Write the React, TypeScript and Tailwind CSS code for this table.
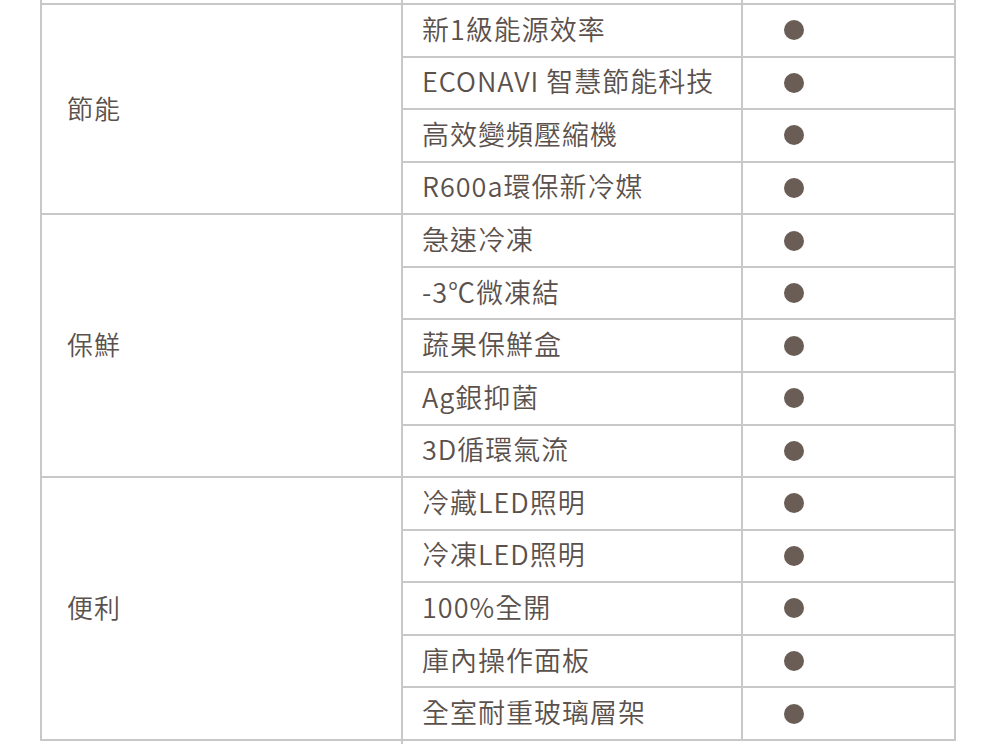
const groups = [
  {
    label: '節能',
    items: ['新1級能源效率', 'ECONAVI 智慧節能科技', '高效變頻壓縮機', 'R600a環保新冷媒'],
  },
  {
    label: '保鮮',
    items: ['急速冷凍', '-3℃微凍結', '蔬果保鮮盒', 'Ag銀抑菌', '3D循環氣流'],
  },
  {
    label: '便利',
    items: ['冷藏LED照明', '冷凍LED照明', '100%全開', '庫內操作面板', '全室耐重玻璃層架'],
  },
];

const line = 'border-[2px] border-[#c8c8c8]';

export default function App() {
  return (
    <div
      className="h-[756px] w-[1000px] overflow-hidden bg-white text-[#5b514c]"
      style={{ fontFamily: '"Noto Sans CJK TC", "Noto Sans", sans-serif' }}
    >
      <table className="ml-[40px] w-[914px] table-fixed border-collapse">
        <colgroup>
          <col className="w-[361px]" />
          <col className="w-[340px]" />
          <col className="w-[213px]" />
        </colgroup>
        <tbody>
          {/* cut-off row above the visible part */}
          <tr className="h-[4px]">
            <td className="border-x-[2px] border-[#c8c8c8] p-0" />
            <td className="border-x-[2px] border-[#c8c8c8] p-0" />
            <td className="border-x-[2px] border-[#c8c8c8] p-0" />
          </tr>
          {groups.map((group) =>
            group.items.map((item, i) => (
              <tr key={item} className="h-[52.57px]">
                {i === 0 && (
                  <td
                    rowSpan={group.items.length}
                    className={`${line} pl-[25px] pb-[3px] text-[26px] font-[350] leading-none tracking-[1px]`}
                  >
                    {group.label}
                  </td>
                )}
                <td className={`${line} pl-[19px] pb-[4px] text-[27px] font-[350] leading-none tracking-[1px] whitespace-nowrap`}>
                  {item}
                </td>
                <td className={`${line} p-0`}>
                  <div className="ml-[41px] h-[20px] w-[20px] rounded-full bg-[#6a5d56]" />
                </td>
              </tr>
            ))
          )}
          <tr className="h-[4px]">
            <td className="p-0" />
            <td className="border-l-[2px] border-[#c8c8c8] p-0" />
            <td className="p-0" />
          </tr>
        </tbody>
      </table>
    </div>
  );
}
